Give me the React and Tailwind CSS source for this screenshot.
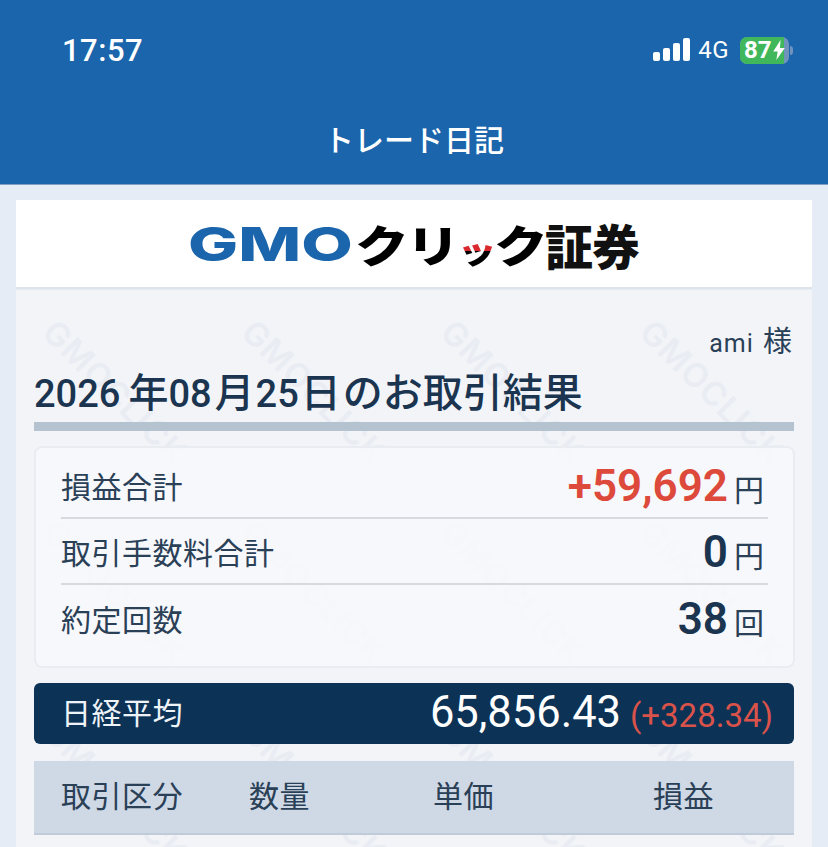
// App.jsx
const FONT = "font-['Roboto','Noto_Sans_CJK_JP',sans-serif]";

const summaryRows = [
  { label: "損益合計", value: "+59,692", unit: "円", valueClass: "text-[#dd4a3c]" },
  { label: "取引手数料合計", value: "0", unit: "円", valueClass: "text-[#1b3550]" },
  { label: "約定回数", value: "38", unit: "回", valueClass: "text-[#1b3550]" },
];

const Watermark = () => (
  <div className="absolute inset-0 overflow-hidden pointer-events-none grid grid-cols-[repeat(4,199px)] auto-rows-[200px] pt-[3px]">
    {Array.from({ length: 12 }).map((_, i) => (
      <div key={i} className="flex items-center justify-center h-[200px] w-[199px]">
        <span className="rotate-45 text-[33px] font-['Inter',sans-serif] font-semibold tracking-[1px] text-[#e9edf3] whitespace-nowrap">
          GMOCLICK
        </span>
      </div>
    ))}
  </div>
);

const SignalBars = () => (
  <svg width="37" height="24" viewBox="0 0 37 24" fill="#fff">
    <rect x="0" y="14" width="7" height="9" rx="2" />
    <rect x="10" y="10" width="7" height="13" rx="2" />
    <rect x="20" y="5" width="7" height="18" rx="2" />
    <rect x="30" y="0" width="7" height="23" rx="2" />
  </svg>
);

const Battery = () => (
  <div className="flex items-center">
    <div className="w-[49px] h-[27px] rounded-[7px] bg-[#6f93bd] overflow-hidden">
      <div className="w-[44px] h-full bg-[#41b75c] flex items-center pl-[4px] text-white text-[24px] font-bold leading-none">
        87
        <svg width="12" height="20" viewBox="0 0 11 19" fill="#fff" className="ml-[1px] shrink-0">
          <path d="M7 0 0 11h4.2L3 19l8-11.5H6.4z" />
        </svg>
      </div>
    </div>
    <div className="w-[3px] h-[9px] rounded-r-full bg-[#6f93bd] ml-[1px]" />
  </div>
);

const Logo = () => (
  <div className="flex items-center h-[50px] w-[452px]">
    <span className="w-[167px] shrink-0 origin-left scale-x-[1.42] whitespace-nowrap font-['Inter',sans-serif] font-extrabold text-[47px] leading-none text-[#1a65ab]">
      GMO
    </span>
    <span className="w-[190px] shrink-0 origin-left scale-x-[1.22] whitespace-nowrap font-['Noto_Sans_CJK_JP',sans-serif] font-black text-[44px] leading-none tracking-[-2px] text-black">
      クリ
      <span className="text-[32px] bg-linear-to-b from-[#d9292e] from-55% to-black to-55% bg-clip-text text-transparent">ッ</span>
      ク
    </span>
    <span className="w-[95px] shrink-0 whitespace-nowrap font-['Noto_Sans_CJK_JP',sans-serif] font-black text-[48px] leading-none tracking-[-1px] text-[#111]">
      証券
    </span>
  </div>
);

export default function App() {
  return (
    <div className={`${FONT} w-[828px] h-[847px] overflow-hidden bg-[#e6ecf6] text-[#1b3550]`}>
      <header className="h-[185px] bg-[#1a65ab] border-b border-[#7f9fc6] text-white">
        <div className="flex items-center justify-between pt-[32px] pl-[62px] pr-[35px] h-[68px]">
          <span className="text-[31px] font-medium leading-none tracking-[0.5px]">17:57</span>
          <div className="flex items-center gap-[8px]">
            <SignalBars />
            <span className="text-[24px] leading-none font-normal tracking-[0.5px] mr-[3px]">4G</span>
            <Battery />
          </div>
        </div>
        <div className="flex justify-center mt-[53px] text-[30px] leading-[40px] font-medium">
          トレード日記
        </div>
      </header>

      <div className="px-[16px] pt-[15px]">
        <div className="h-[89px] bg-white border-b-2 border-[#dfe3ea] flex items-center justify-center">
          <Logo />
        </div>

        <main className="relative bg-[#f2f4f8] mt-[1px] h-[600px] px-[18px]">
          <Watermark />
          <div className="relative">
            <div className="pt-[35px] pr-[1px] text-right text-[25px] leading-[34px] tracking-[1px] text-[#2a4057]">
              ami <span className="text-[29px] ml-[2px]">様</span>
            </div>
            <h1 className="mt-[10px] h-[46px] text-[40px] leading-[46px] font-medium whitespace-nowrap">
              <span className="text-[38px]">2026</span>
              <span className="ml-[8px]">年</span>
              <span className="text-[38px]">08</span>
              <span className="ml-[3px]">月</span>
              <span className="ml-[1px] text-[38px]">25</span>
              <span className="ml-[2px]">日</span>
              <span className="ml-[2px]">のお取引結果</span>
            </h1>
            <div className="mt-[5px] h-[9px] bg-[#b4c3cf]" />

            <section className="mt-[15px] w-[761px] h-[222px] bg-[#f7f9fb]/80 border-2 border-[#e9ecf1] rounded-[8px] px-[25px] pt-[5px]">
              {summaryRows.map((row, i) => (
                <div
                  key={row.label}
                  className={`flex items-center justify-between h-[66px] ${i < 2 ? "border-b-2 border-[#d6d9dd]" : ""}`}
                >
                  <span className="pt-[6px] text-[30px] leading-none text-[#2a4057] tracking-[0.5px]">{row.label}</span>
                  <span className="flex items-baseline pt-[2px] pr-[2px]">
                    <span className={`text-[44px] leading-none font-semibold ${row.valueClass}`}>{row.value}</span>
                    <span className="text-[30px] leading-none ml-[6px] mr-[2px] text-[#2a4057]">{row.unit}</span>
                  </span>
                </div>
              ))}
            </section>

            <section className="mt-[15px] w-[760px] h-[61px] bg-[#0c3256] rounded-[6px] flex items-center justify-between pl-[27px] pr-[21px] text-white">
              <span className="text-[30px] leading-none tracking-[0.5px] text-[#eef3f8]">日経平均</span>
              <span className="flex items-baseline pb-[2px]">
                <span className="text-[43.5px] leading-none">65,856.43</span>
                <span className="text-[33px] leading-none ml-[9px] text-[#d9534a]">(+328.34)</span>
              </span>
            </section>

            <section className="mt-[17px] w-[760px] h-[74px] bg-[#cfd8e5] border-b-2 border-[#bfcbd9] grid grid-cols-[215px_184px_220px_141px] items-center text-[30px] leading-none text-[#2a4057] tracking-[0.5px]">
              <span className="pl-[27px]">取引区分</span>
              <span>数量</span>
              <span>単価</span>
              <span>損益</span>
            </section>
          </div>
        </main>
      </div>
    </div>
  );
}
